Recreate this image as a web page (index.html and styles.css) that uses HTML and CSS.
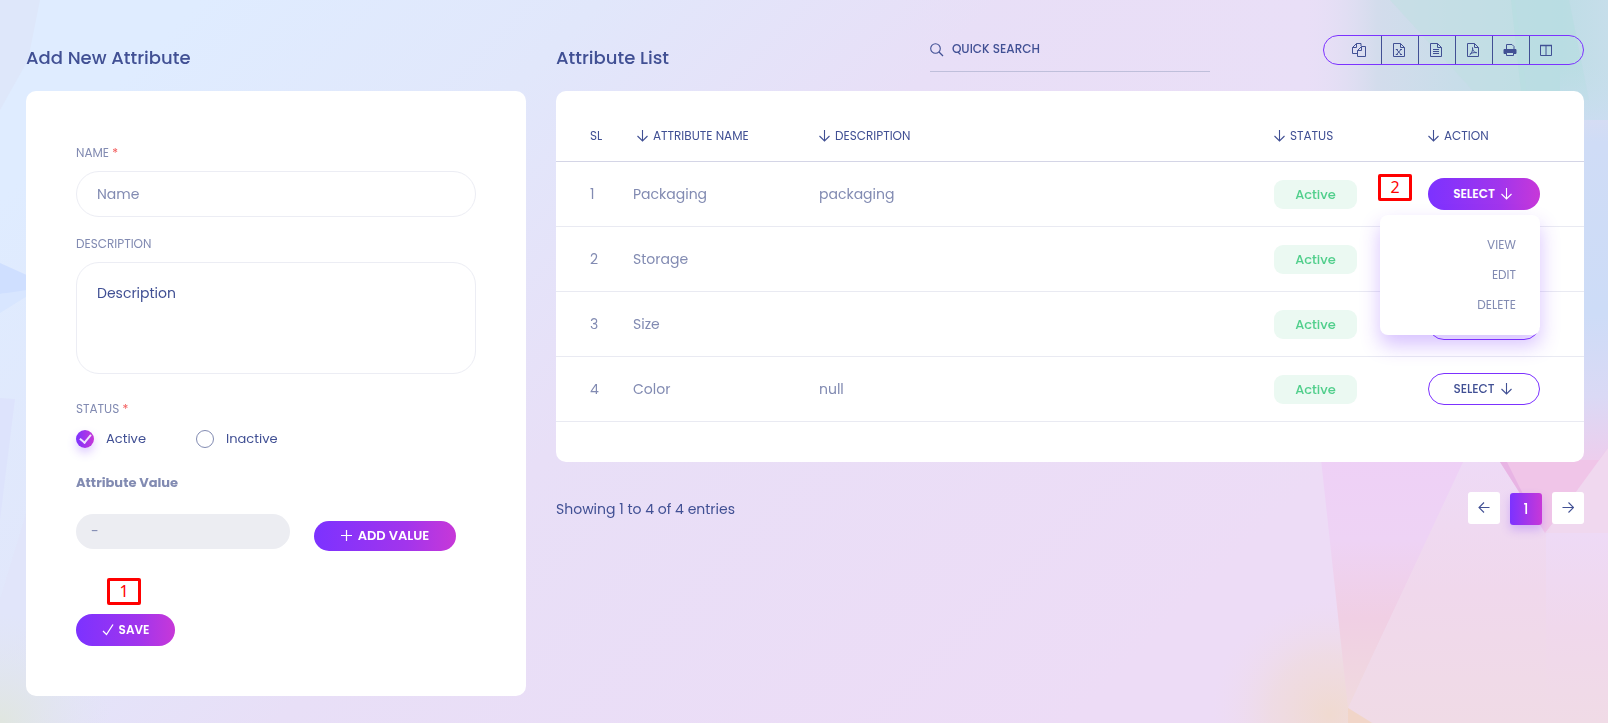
FILE: index.html
```html
<!DOCTYPE html>
<html lang="en">
<head>
<meta charset="utf-8">
<meta name="viewport" content="width=device-width, initial-scale=1">
<title>Attributes</title>
<link rel="stylesheet" href="styles.css">
</head>
<body>
<svg class="backdrop" viewBox="0 0 1608 723" preserveAspectRatio="none" aria-hidden="true">
  <defs>
    <linearGradient id="base" gradientUnits="userSpaceOnUse" x1="200" y1="0" x2="1000" y2="800">
      <stop offset="0" stop-color="#dfecff"/><stop offset=".25" stop-color="#e1e7fb"/>
      <stop offset=".5" stop-color="#e8dff7"/><stop offset="1" stop-color="#eddcf6"/>
    </linearGradient>
    <linearGradient id="lilac" x1="0" y1="0" x2="1" y2="0">
      <stop offset="0" stop-color="#e9dff7" stop-opacity="0"/><stop offset="1" stop-color="#e9dff7"/>
    </linearGradient>
    <linearGradient id="teal" x1="0" y1="0" x2="1" y2="0">
      <stop offset="0" stop-color="#e9dff7" stop-opacity="0"/><stop offset=".25" stop-color="#d3dcec"/>
      <stop offset=".5" stop-color="#c8dde9"/><stop offset=".85" stop-color="#bfdde6"/><stop offset="1" stop-color="#c6deea"/>
    </linearGradient>
    <linearGradient id="side" x1="0" y1="0" x2="0" y2="1">
      <stop offset="0" stop-color="#c5deea" stop-opacity="0"/><stop offset=".2" stop-color="#cfdcf6"/>
      <stop offset=".62" stop-color="#cddcf7"/><stop offset=".82" stop-color="#dad9f5"/>
      <stop offset="1" stop-color="#f0ccec"/>
    </linearGradient>
    <linearGradient id="wedge" x1="0" y1="0" x2="0" y2="1">
      <stop offset="0" stop-color="#eed0f6"/><stop offset=".35" stop-color="#eed3f5"/>
      <stop offset=".65" stop-color="#f0cfe4"/><stop offset="1" stop-color="#f0dade"/>
    </linearGradient>
    <linearGradient id="blush" x1="0" y1="0" x2="0" y2="1">
      <stop offset="0" stop-color="#eedaf6"/><stop offset=".5" stop-color="#f0d8ec"/>
      <stop offset="1" stop-color="#f0dbe6"/>
    </linearGradient>
    <radialGradient id="sand"><stop offset="0" stop-color="#f0dad0"/><stop offset=".5" stop-color="#efdbe0" stop-opacity=".8"/><stop offset="1" stop-color="#eedcf2" stop-opacity="0"/></radialGradient>
    <radialGradient id="sage"><stop offset="0" stop-color="#e0e6df"/><stop offset="1" stop-color="#e0e6ef" stop-opacity="0"/></radialGradient>
  </defs>
  <rect width="1608" height="723" fill="url(#base)"/>
  <path d="M900 0h400v120h-400z" fill="url(#lilac)"/>
  <path d="M1300 0h308v120h-308z" fill="#e9dff7"/>
  <path d="M0 0h40l-12 60L0 110z" fill="#dee7fa"/>
  <path d="M0 263l40 18v10L0 294z" fill="#cfdfff"/>
  <path d="M0 294l40-6L0 313z" fill="#d8e6ff"/>
  <path d="M0 398l15 1L0 520z" fill="#dde3fc"/>
  <path d="M30 500v223H0V600z" fill="#e1e4f9" opacity=".7"/>
  <circle cx="0" cy="723" r="110" fill="url(#sage)"/>
  <path d="M1300 0h308v120h-308z" fill="url(#teal)"/>
  <path d="M1390 0h125l12 95h-50z" fill="#bfdfe2" opacity=".5"/>
  <path d="M1511 0h58l20 100h-67z" fill="#b4dde0" opacity=".5"/>
  <path d="M1560 60h48v410h-48z" fill="url(#side)"/>
  <circle cx="1330" cy="715" r="120" fill="url(#sand)"/>
  <path d="M1320 450h150l-122 258z" fill="url(#wedge)"/>
  <path d="M1464 460h144v263h-235l-25-15z" fill="url(#blush)"/>
  <path d="M1499 460h100l9-12v5l-63 80z" fill="#f0c5e8"/>
  <path d="M1500 462h7l17 34-3-1z" fill="#e8b4e4"/>
  <path d="M1608 448v275h-62V533z" fill="#f0d8ef"/>
  <path d="M1546 533h62v190h-62z" fill="url(#blush)"/>
  <path d="M1348 708l24 15h-24z" fill="#f1d5c8"/>
</svg>
<svg width="0" height="0" class="sprite" aria-hidden="true">
  <symbol id="down" viewBox="0 0 12 12"><path d="M5.500 0v11M.5 6l5 5 5-5" fill="none" stroke="currentColor" stroke-width="1.100"/></symbol>
  <symbol id="left" viewBox="0 0 12 12"><path d="M11.500 5.500H1M6 .5l-5 5 5 5" fill="none" stroke="currentColor" stroke-width="1.100"/></symbol>
  <symbol id="right" viewBox="0 0 12 12"><path d="M.5 5.500h11M6.500.5l5 5-5 5" fill="none" stroke="currentColor" stroke-width="1.100"/></symbol>
</svg>

<main class="page">
  <section>
    <header class="head"><h1 class="title">Add New Attribute</h1></header>
    <form class="card form">
      <label class="label" for="name">NAME <span class="req">*</span></label>
      <input class="input" id="name" type="text" placeholder="Name">
      <label class="label label-next" for="desc">DESCRIPTION</label>
      <textarea class="input area" id="desc">Description</textarea>
      <fieldset class="status">
        <legend class="label">STATUS <span class="req">*</span></legend>
        <div class="radios">
          <label class="choice"><input class="radio" type="radio" name="status" checked>Active</label>
          <label class="choice"><input class="radio" type="radio" name="status">Inactive</label>
        </div>
      </fieldset>
      <label class="subhead" for="value">Attribute Value</label>
      <div class="value-row">
        <input class="value" id="value" type="text" value="-">
        <button class="btn fill add" type="button"><svg class="ico" viewBox="0 0 12 12"><path d="M5.500 0v11M0 5.500h11" stroke="currentColor" stroke-width="1.200"/></svg>ADD VALUE</button>
      </div>
      <div class="save-row">
        <button class="btn fill save" type="button"><svg class="ico" viewBox="0 0 12 12"><path d="M1 7l3.500 3.500L11 .5" fill="none" stroke="currentColor" stroke-width="1.300"/></svg>SAVE</button>
        <span class="note note-save">1</span>
      </div>
    </form>
  </section>

  <section>
    <header class="head">
      <h2 class="title">Attribute List</h2>
      <label class="search">
        <svg class="lens" viewBox="0 0 14 14"><circle cx="5.500" cy="5.500" r="4.800" fill="none" stroke="currentColor" stroke-width="1.100"/><path d="M9 9l4 4" stroke="currentColor" stroke-width="1.300"/></svg>
        <input class="search-input" type="text" placeholder="QUICK SEARCH" aria-label="Quick search">
      </label>
      <div class="tools">
        <button class="tool" type="button" aria-label="Copy"><svg viewBox="0 0 14 14"><path d="M5.500 10.500h-5v-6l4-4h4.500v2.500M4.500.5v4h-4M9.500 3.500h4v10h-8v-6zM9.500 3.500v4h-4"/></svg></button>
        <button class="tool" type="button" aria-label="Excel"><svg viewBox="0 0 14 14"><path d="M1.500.5h7l4 4v9h-11zM8.500.5v4h4M4.500 6.500l4.500 5M9 6.500l-4.500 5M3.800 6.500h2M8 6.500h2M3.800 11.500h2M8 11.500h2"/></svg></button>
        <button class="tool" type="button" aria-label="CSV"><svg viewBox="0 0 14 14"><path d="M1.500.5h7l4 4v9h-11zM8.500.5v4h4M4 6.500h6M4 8.500h6M4 10.500h6"/></svg></button>
        <button class="tool" type="button" aria-label="PDF"><svg viewBox="0 0 14 14"><path d="M1.500.5h7l4 4v9h-11zM8.500.5v4h4M3.500 12c2-1 3.500-4.500 3-7.500 0 3 1.500 5 4.200 5.200-3-.4-5 .3-6.700 1.300"/></svg></button>
        <button class="tool" type="button" aria-label="Print"><svg viewBox="0 0 14 14"><path d="M3.500 6V1.500h5.500l2 2V6"/><path d="M1 6.500h12v4H1z" fill="currentColor"/><path class="paper" d="M3.500 9.500h7v3h-7z"/></svg></button>
        <button class="tool" type="button" aria-label="Columns"><svg viewBox="0 0 14 14"><path d="M1.500 2.500h11v10h-11zM7 2v11"/><path d="M1 2.500h12" stroke-width="1.500"/></svg></button>
      </div>
    </header>
    <div class="card list">
      <table class="table">
        <colgroup><col class="c-sl"><col class="c-name"><col><col class="c-status"><col class="c-action"></colgroup>
        <thead><tr>
          <th>SL</th>
          <th><span class="sort sort-in"><svg class="arrow"><use href="#down"/></svg>ATTRIBUTE NAME</span></th>
          <th><span class="sort"><svg class="arrow"><use href="#down"/></svg>DESCRIPTION</span></th>
          <th><span class="sort"><svg class="arrow"><use href="#down"/></svg>STATUS</span></th>
          <th><span class="sort"><svg class="arrow"><use href="#down"/></svg>ACTION</span></th>
        </tr></thead>
        <tbody>
          <tr><td>1</td><td>Packaging</td><td>packaging</td><td><span class="badge">Active</span></td>
            <td><div class="action"><button class="btn fill select" type="button">SELECT<svg class="arrow"><use href="#down"/></svg></button>
              <span class="note note-select">2</span>
              <div class="menu"><a href="#view">VIEW</a><a href="#edit">EDIT</a><a href="#delete">DELETE</a></div></div></td></tr>
          <tr><td>2</td><td>Storage</td><td></td><td><span class="badge">Active</span></td>
            <td><button class="btn line select" type="button">SELECT<svg class="arrow"><use href="#down"/></svg></button></td></tr>
          <tr><td>3</td><td>Size</td><td></td><td><span class="badge">Active</span></td>
            <td><button class="btn line select" type="button">SELECT<svg class="arrow"><use href="#down"/></svg></button></td></tr>
          <tr><td>4</td><td>Color</td><td>null</td><td><span class="badge">Active</span></td>
            <td><button class="btn line select" type="button">SELECT<svg class="arrow"><use href="#down"/></svg></button></td></tr>
        </tbody>
      </table>
    </div>
    <footer class="foot">
      <p class="info">Showing 1 to 4 of 4 entries</p>
      <nav class="pager">
        <button class="pg" type="button" aria-label="Previous"><svg class="arrow"><use href="#left"/></svg></button>
        <button class="pg current" type="button">1</button>
        <button class="pg" type="button" aria-label="Next"><svg class="arrow"><use href="#right"/></svg></button>
      </nav>
    </footer>
  </section>
</main>
</body>
</html>
```

FILE: styles.css
```css
* { box-sizing: border-box; }
body {
  margin: 0;
  min-height: 100vh;
  background: #e8dff7;
  color: #415094;
  font: 14px/20px Poppins, Inter, sans-serif;
}
button, input, textarea { font: inherit; color: inherit; }
button { cursor: pointer; }
.backdrop { position: fixed; inset: 0; width: 100%; height: 100%; z-index: -1; }
.sprite { position: absolute; }

.page {
  display: grid;
  grid-template-columns: 500fr 1028fr;
  gap: 30px;
  align-items: start;
  padding: 35px 24px 24px 26px;
}
.head { display: flex; align-items: flex-start; height: 56px; }
.title { flex: 1; margin: 0; font-size: 18px; line-height: 45px; font-weight: 500; }
.card { background: #fff; border-radius: 10px; }

.form { padding: 53px 50px 50px; }
.label { display: block; padding: 0; font-size: 12px; line-height: 18px; color: #828bb2; margin-bottom: 9px; }
.label-next { margin-top: 18px; }
.req { color: #f35b5b; }
.input {
  display: block;
  width: 100%;
  height: 46px;
  padding: 0 20px;
  border: 1px solid #ecedf4;
  border-radius: 23px;
  background: #fff;
  outline: 0;
}
.input::placeholder { color: #828bb2; opacity: 1; }
.area { height: 112px; padding-top: 20px; resize: none; }
.status { margin: 26px 0 25px; padding: 0; border: 0; }
.status .label { margin-bottom: 12px; }
.radios { display: flex; }
.choice { display: flex; align-items: center; width: 120px; height: 18px; gap: 12px; font-size: 13px; }
.radio {
  appearance: none;
  width: 18px;
  height: 18px;
  margin: 0;
  border: 1px solid #828bb2;
  border-radius: 50%;
  flex: none;
}
.radio:checked {
  display: grid;
  place-items: center;
  border: 0;
  background: linear-gradient(90deg, #7c32ff, #c738d8);
  box-shadow: 0 5px 10px rgba(124, 50, 255, .25);
}
.radio:checked::before {
  content: "";
  width: 5px;
  height: 9px;
  margin-bottom: 3px;
  border: solid #eee4ff;
  border-width: 0 2px 2px 0;
  transform: rotate(40deg);
}
.subhead { display: block; font-size: 13px; font-weight: 700; color: #828bb2; margin-bottom: 21px; }
.value-row { display: flex; gap: 24px; height: 37px; }
.value {
  width: 214px;
  height: 35px;
  padding: 0 15px;
  border: 0;
  border-radius: 18px;
  background: #ecedf2;
  color: #828bb2;
}
.btn {
  display: inline-flex;
  align-items: center;
  justify-content: center;
  height: 32px;
  padding: 0;
  border: 0;
  border-radius: 16px;
  font-size: 12px;
  font-weight: 500;
}
.fill {
  color: #fff;
  font-weight: 600;
  background: linear-gradient(90deg, #7c32ff 0%, #a235ec 65%, #c738d8 100%);
}
.line { border: 1px solid #7c32ff; background: #fff; }
.ico { width: 12px; height: 12px; margin-right: 5px; }
.arrow { width: 12px; height: 12px; flex: none; }
.add { width: 142px; height: 30px; margin-top: 7px; font-size: 13px; }
.save-row { position: relative; display: flex; margin-top: 63px; }
.save { width: 99px; }
.note {
  position: absolute;
  width: 34px;
  height: 27px;
  border: 3px solid #f00;
  border-radius: 2px;
  background: #fff;
  color: #f00;
  font: 16px/21px "Noto Sans", sans-serif;
  text-align: center;
}
.note-save { left: 31px; top: -36px; }

.search {
  display: flex;
  align-items: flex-start;
  gap: 8px;
  width: 280px;
  height: 37px;
  margin-right: 11%;
  border-bottom: 1px solid #bfbfdb;
}
.lens { width: 14px; height: 14px; margin-top: 8px; }
.search-input {
  flex: 1;
  min-width: 0;
  height: 28px;
  padding: 0;
  border: 0;
  outline: 0;
  background: none;
  font-size: 12px;
  font-weight: 500;
}
.search-input::placeholder { color: #415094; opacity: 1; }
.tools { display: flex; height: 30px; padding: 0 21px 0 16px; border: 1px solid #7c32ff; border-radius: 15px; }
.tool {
  display: grid;
  place-items: center;
  width: 37px;
  padding: 0 3px 0 0;
  border: 0;
  border-right: 1px solid #415094;
  background: none;
}
.tool:first-child { width: 42px; }
.tool:last-child { width: 32px; padding: 0; border-right: 0; }
.tool svg { width: 14px; height: 14px; fill: none; stroke: currentColor; }
.tool .paper { fill: #c2dde6; }

.list { padding-bottom: 40px; }
.table { width: 100%; border-collapse: separate; border-spacing: 0; table-layout: fixed; }
.c-sl { width: 77px; }
.c-name { width: 186px; }
.c-status { width: 154px; }
.c-action { width: 156px; }
th { padding: 36px 0 16px; border-bottom: 1px solid #d4d5e6; font-size: 12px; line-height: 18px; font-weight: 400; text-align: left; }
td { height: 65px; padding: 0; border-bottom: 1px solid #e9eaf2; color: #828bb2; }
th:first-child, td:first-child { padding-left: 34px; }
.sort { display: flex; align-items: center; gap: 4px; }
.sort-in { padding-left: 4px; }
.badge {
  display: block;
  width: 83px;
  height: 29px;
  border-radius: 9px;
  background: #ebf9f2;
  color: #51cf8c;
  font-size: 13px;
  line-height: 29px;
  font-weight: 500;
  text-align: center;
}
.action { position: relative; width: 112px; height: 32px; }
.select { width: 112px; gap: 6px; padding-right: 2px; }
.line.select { color: #415094; }
.note-select { left: -50px; top: -4px; }
.menu {
  position: absolute;
  right: 0;
  top: 37px;
  z-index: 2;
  display: flex;
  flex-direction: column;
  width: 160px;
  padding: 15px 24px;
  border-radius: 8px;
  background: #fff;
  box-shadow: 0 10px 20px rgba(124, 50, 255, .3);
}
.menu a { color: #828bb2; font-size: 12px; line-height: 30px; text-align: right; text-decoration: none; }

.foot { display: flex; justify-content: space-between; padding-top: 30px; }
.info { margin: 0; line-height: 34px; }
.pager { display: flex; gap: 10px; }
.pg {
  display: grid;
  place-items: center;
  width: 32px;
  height: 32px;
  padding: 0;
  border: 0;
  border-radius: 3px;
  background: #fff;
}
.current {
  margin-top: 1px;
  color: #fff;
  font-weight: 500;
  background: linear-gradient(90deg, #7c32ff, #c738d8);
  box-shadow: 0 5px 10px rgba(124, 50, 255, .25);
}
```
